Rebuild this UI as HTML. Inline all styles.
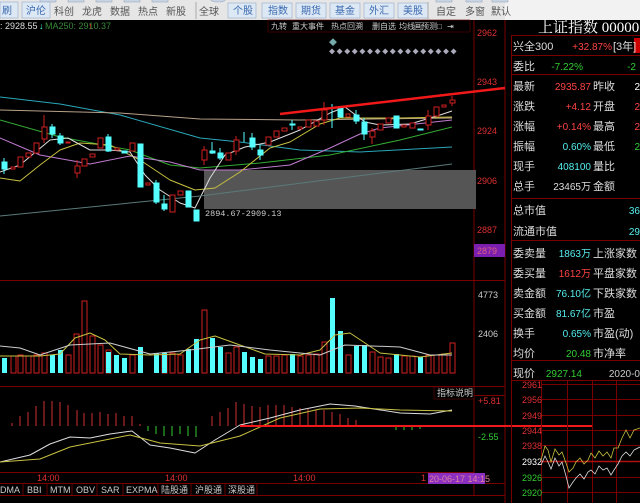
<!DOCTYPE html>
<html><head><meta charset="utf-8"><style>
body{margin:0;background:#000;width:640px;height:503px;overflow:hidden;font-family:"Liberation Sans","Noto Sans CJK SC",sans-serif}
svg{display:block}
</style></head><body>
<svg width="640" height="503" viewBox="0 0 640 503" xmlns="http://www.w3.org/2000/svg" font-family="Liberation Sans, Noto Sans CJK SC, sans-serif">
<rect width="640" height="503" fill="#000"/>
<!-- toolbar -->
<rect x="0" y="0" width="640" height="20" fill="#e6e6e6"/>
<rect x="505" y="0" width="135" height="20" fill="#f2f2f2"/>
<g fill="#c8d4e4" stroke="#9aa8bc" stroke-width="0.6">
<rect x="40" y="-6" width="16" height="8"/><rect x="68" y="-6" width="16" height="8"/><rect x="96" y="-6" width="16" height="8"/><rect x="124" y="-6" width="16" height="8"/><rect x="152" y="-6" width="16" height="8"/><rect x="210" y="-6" width="16" height="8" rx="6"/>
<rect x="436" y="-6" width="16" height="8"/><rect x="466" y="-6" width="16" height="8"/><rect x="492" y="-6" width="16" height="8"/>
</g>
<g fill="#dde8f5" stroke="#9fb3cc" stroke-width="0.7">
<rect x="0" y="2" width="18" height="16"/><rect x="22" y="2" width="28" height="16"/>
<rect x="228" y="3" width="28" height="15"/><rect x="262" y="3" width="30" height="15"/><rect x="296" y="3" width="30" height="15"/><rect x="330" y="3" width="30" height="15"/><rect x="364" y="3" width="30" height="15"/><rect x="398" y="3" width="30" height="15"/>
</g>
<line x1="196" y1="2" x2="196" y2="19" stroke="#aaa"/><line x1="428" y1="2" x2="428" y2="19" stroke="#aaa"/>
<g font-size="10" fill="#555">
<text x="2" y="14" fill="#3a6ab0">刷</text><text x="26" y="14" fill="#3a6ab0">沪伦</text>
<text x="54" y="15">科创</text><text x="82" y="15">龙虎</text><text x="110" y="15">数据</text><text x="138" y="15">热点</text><text x="166" y="15">新股</text>
<text x="199" y="15">全球</text>
<text x="233" y="14" fill="#3a6ab0">个股</text><text x="268" y="14" fill="#3a6ab0">指数</text><text x="301" y="14" fill="#3a6ab0">期货</text><text x="335" y="14" fill="#3a6ab0">基金</text><text x="369" y="14" fill="#3a6ab0">外汇</text><text x="403" y="14" fill="#3a6ab0">美股</text>
<text x="436" y="15">自定</text><text x="465" y="15">多窗</text><text x="491" y="15">默认</text>
</g>
<!-- info line -->
<g font-size="9">
<text x="0" y="29" fill="#ddd">: 2928.55</text><text x="39" y="29" fill="#4fd">↓</text>
<text x="45" y="29" fill="#3a8a3a">MA250: 2910.37</text><text x="88" y="29" fill="#f33">↑</text>
</g>
<g font-size="8" fill="#ccc">
<rect x="268" y="20" width="202" height="12" fill="#000" stroke="#600" stroke-width="0.6"/>
<text x="271" y="29">九转</text><text x="292" y="29">重大事件</text><text x="331" y="29">热点回溯</text><text x="372" y="29">删自选</text><text x="399" y="29">均线</text><text x="414" y="29">画</text><text x="421" y="29">预测</text><text x="437" y="29">□</text><text x="447" y="29">⇥</text>
</g>
<text x="329" y="45" font-size="8" fill="#7aa">◆</text>
<text x="329" y="54" font-size="6" fill="#aab" letter-spacing="1.6">◆◆◆◆◆◆◆◆◆◆◆◆◆◆◆◆◆</text>
<!-- grid / frames -->
<g stroke="#7a0000" stroke-width="1" fill="none">
<line x1="474" y1="20" x2="474" y2="495"/>
<line x1="505" y1="20" x2="505" y2="503"/>
<line x1="0" y1="280.5" x2="505" y2="280.5"/>
<line x1="0" y1="386.5" x2="505" y2="386.5"/>
<line x1="0" y1="472.5" x2="474" y2="472.5"/>
<line x1="0" y1="483.5" x2="505" y2="483.5"/>
<line x1="0" y1="495.5" x2="505" y2="495.5"/>
<line x1="474" y1="395.5" x2="505" y2="395.5"/>
</g>
<g font-size="9" fill="#e03030">
<text x="477" y="36">2962</text><text x="477" y="85">2943</text><text x="477" y="134">2924</text><text x="477" y="184">2906</text><text x="477" y="233">2887</text>
<text x="478" y="404">+5.81</text>
</g>
<rect x="474" y="244" width="31" height="13" fill="#7a1fb0"/>
<text x="477" y="254" font-size="9" fill="#e06080">2879</text>
<g font-size="9" fill="#ccc"><text x="478" y="298">4773</text><text x="478" y="337">2406</text></g>
<text x="478" y="440" font-size="9" fill="#3c3">-2.55</text>
<rect x="204" y="170" width="272" height="39" fill="#555"/>
<text x="205" y="216" font-size="8.5" fill="#ccc" font-family="Liberation Mono, monospace">2894.67-2909.13</text>
<!-- MAs -->
<g fill="none" stroke-width="1" stroke-linejoin="round">
<polyline points="0,97 60,104 120,115 200,138 240,142 300,150 360,152 452,147" stroke="#2aa7b8"/>
<polyline points="0,110 120,113 200,119 300,120 452,118" stroke="#b8a28a"/>
<polyline points="0,120 60,137 130,150 170,165 200,168 260,163 330,155 400,140 452,127" stroke="#3a3"/>
<polyline points="0,138 40,155 90,164 130,156 170,162 200,170 240,170 290,165 330,148 360,134 380,128 452,120" stroke="#c07ad0"/>
<polyline points="0,178 20,181 40,165 60,150 80,143 110,145 140,160 170,180 195,190 215,188 240,172 270,148 290,142 320,124 340,118 400,118 452,117" stroke="#c8c040"/>
<polyline points="0,172 20,165 50,140 68,138 90,150 110,150 130,152 145,175 160,190 180,203 195,208 210,178 225,155 245,147 270,142 300,130 330,113 345,107 365,122 380,125 410,124 440,115 452,111" stroke="#ddd"/>
<polyline points="0,216 200,196 452,164" stroke="#5a7a7a"/>
</g>
<!-- candles -->
<g stroke-width="1">
<g stroke="#d02020" fill="#000">
<rect x="11" y="167" width="4" height="2"/><rect x="18" y="157" width="5" height="10"/><rect x="26" y="153" width="5" height="4"/><rect x="34" y="143" width="5" height="10"/><line x1="44" y1="115" x2="44" y2="143"/><rect x="42" y="127" width="5" height="12"/>
<rect x="66" y="142" width="4" height="1"/><line x1="77" y1="160" x2="77" y2="178"/><rect x="75" y="166" width="5" height="7"/><rect x="82" y="159" width="5" height="7"/><rect x="90" y="154" width="5" height="3"/><rect x="98" y="138" width="5" height="10"/>
<rect x="115" y="148" width="4" height="2"/><rect x="130" y="143" width="5" height="8"/><rect x="146" y="183" width="4" height="2"/><rect x="170" y="195" width="5" height="17"/><rect x="178" y="191" width="5" height="4"/>
<line x1="204" y1="146" x2="204" y2="165"/><rect x="202" y="150" width="5" height="10"/><rect x="226" y="153" width="5" height="7"/><line x1="236" y1="136" x2="236" y2="155"/><rect x="234" y="140" width="5" height="11"/>
<rect x="266" y="137" width="5" height="8"/><rect x="274" y="131" width="5" height="6"/><rect x="282" y="128" width="5" height="3"/><rect x="298" y="127" width="4" height="2"/><rect x="306" y="120" width="5" height="7"/><rect x="314" y="121" width="5" height="5"/>
<line x1="324" y1="102" x2="324" y2="125"/><rect x="322" y="110" width="5" height="10"/><rect x="346" y="114" width="4" height="3"/><line x1="372" y1="128" x2="372" y2="144"/><rect x="370" y="131" width="5" height="6"/><rect x="378" y="124" width="5" height="6"/><rect x="386" y="118" width="5" height="5"/>
<rect x="402" y="125" width="4" height="2"/><rect x="410" y="123" width="5" height="5"/><line x1="428" y1="110" x2="428" y2="130"/><rect x="426" y="116" width="5" height="9"/><rect x="434" y="107" width="5" height="9"/><rect x="442" y="105" width="4" height="2"/><line x1="452" y1="96" x2="452" y2="106"/><rect x="450" y="100" width="5" height="3"/>
</g>
<g stroke="#5ff" fill="#5ff">
<line x1="4" y1="158" x2="4" y2="174"/><rect x="2" y="162" width="5" height="7"/><line x1="52" y1="124" x2="52" y2="138"/><rect x="50" y="127" width="5" height="7"/><line x1="60" y1="133" x2="60" y2="145"/><rect x="58" y="136" width="5" height="7"/>
<line x1="108" y1="134" x2="108" y2="152"/><rect x="106" y="137" width="5" height="14"/><rect x="122" y="151" width="5" height="2"/><rect x="138" y="144" width="5" height="43"/>
<line x1="156" y1="180" x2="156" y2="204"/><rect x="154" y="183" width="5" height="19"/><line x1="164" y1="195" x2="164" y2="211"/><rect x="162" y="204" width="5" height="5"/><rect x="186" y="191" width="5" height="16"/><rect x="194" y="210" width="5" height="11"/>
<line x1="212" y1="142" x2="212" y2="154"/><rect x="210" y="151" width="5" height="2"/><line x1="220" y1="148" x2="220" y2="160"/><rect x="218" y="153" width="5" height="5"/><line x1="244" y1="132" x2="244" y2="142"/>
<line x1="252" y1="133" x2="252" y2="150"/><rect x="250" y="138" width="5" height="9"/><line x1="260" y1="145" x2="260" y2="160"/><rect x="258" y="150" width="5" height="5"/><line x1="292" y1="120" x2="292" y2="130"/><rect x="290" y="124" width="5" height="1"/>
<line x1="332" y1="104" x2="332" y2="128"/><rect x="338" y="108" width="5" height="9"/><line x1="356" y1="110" x2="356" y2="124"/><rect x="354" y="115" width="5" height="6"/><line x1="364" y1="118" x2="364" y2="140"/><rect x="362" y="122" width="5" height="12"/>
<rect x="394" y="116" width="5" height="12"/><rect x="418" y="129" width="5" height="1"/>
</g>
</g>
<line x1="280" y1="114" x2="505" y2="88" stroke="#f01818" stroke-width="2.5"/>
<!-- volume -->
<g stroke="#d02020" fill="none">
<rect x="11" y="356" width="5" height="17"/><rect x="18" y="355" width="5" height="18"/><rect x="26" y="356" width="5" height="17"/><rect x="34" y="355" width="5" height="18"/><rect x="42" y="353" width="5" height="20"/>
<rect x="66" y="355" width="5" height="18"/><rect x="74" y="334" width="5" height="39"/><rect x="82" y="301" width="5" height="72"/><rect x="90" y="336" width="5" height="37"/><rect x="98" y="345" width="5" height="28"/><rect x="106" y="350" width="5" height="23"/>
<rect x="130" y="355" width="5" height="18"/><rect x="162" y="355" width="5" height="18"/><rect x="170" y="353" width="5" height="20"/><rect x="178" y="355" width="5" height="18"/><rect x="202" y="310" width="5" height="63"/>
<rect x="226" y="353" width="5" height="20"/><rect x="234" y="347" width="5" height="26"/><rect x="266" y="356" width="5" height="17"/><rect x="274" y="356" width="5" height="17"/><rect x="282" y="355" width="5" height="18"/>
<rect x="298" y="356" width="5" height="17"/><rect x="306" y="355" width="5" height="18"/><rect x="314" y="354" width="5" height="19"/><rect x="322" y="342" width="5" height="31"/><rect x="346" y="355" width="5" height="18"/><rect x="370" y="352" width="5" height="21"/><rect x="378" y="357" width="5" height="16"/><rect x="386" y="358" width="5" height="15"/>
<rect x="402" y="356" width="5" height="17"/><rect x="410" y="356" width="5" height="17"/><rect x="426" y="355" width="5" height="18"/><rect x="434" y="355" width="5" height="18"/><rect x="442" y="354" width="5" height="19"/><rect x="450" y="343" width="5" height="30"/>
</g>
<g fill="#5ff">
<rect x="2" y="358" width="5" height="15"/><rect x="50" y="355" width="5" height="18"/><rect x="58" y="350" width="5" height="23"/><rect x="106" y="352" width="5" height="21"/><rect x="114" y="355" width="5" height="18"/><rect x="122" y="358" width="5" height="15"/>
<rect x="138" y="347" width="5" height="26"/><rect x="154" y="353" width="5" height="20"/><rect x="162" y="353" width="5" height="20"/><rect x="186" y="349" width="5" height="24"/><rect x="194" y="339" width="5" height="34"/>
<rect x="210" y="338" width="5" height="35"/><rect x="218" y="347" width="5" height="26"/><rect x="242" y="352" width="5" height="21"/><rect x="250" y="357" width="5" height="16"/><rect x="258" y="359" width="5" height="14"/>
<rect x="290" y="354" width="5" height="19"/><rect x="330" y="298" width="5" height="75"/><rect x="338" y="331" width="5" height="42"/><rect x="354" y="346" width="5" height="27"/><rect x="362" y="345" width="5" height="28"/><rect x="394" y="354" width="5" height="19"/><rect x="418" y="357" width="5" height="16"/>
</g>
<g fill="none" stroke-width="1" stroke-linejoin="round">
<polyline points="0,356 40,356 60,354 75,338 90,333 105,340 120,354 150,355 180,354 200,340 215,336 240,345 265,354 300,355 320,350 335,335 350,333 365,343 380,353 420,357 452,353" stroke="#c8c040"/>
<polyline points="0,346 20,348 40,355 70,345 110,343 150,354 190,350 230,345 270,350 320,355 345,345 400,347 430,355 452,355" stroke="#ccc"/>
</g>
<!-- MACD -->
<g stroke="#d03030" stroke-width="1">
<line x1="12" y1="426" x2="12" y2="423"/><line x1="20" y1="426" x2="20" y2="416"/><line x1="28" y1="426" x2="28" y2="412"/><line x1="36" y1="426" x2="36" y2="406"/><line x1="44" y1="426" x2="44" y2="401"/><line x1="52" y1="426" x2="52" y2="401"/><line x1="60" y1="426" x2="60" y2="402"/><line x1="68" y1="426" x2="68" y2="405"/><line x1="77" y1="426" x2="77" y2="410"/><line x1="84" y1="426" x2="84" y2="413"/><line x1="92" y1="426" x2="92" y2="413"/><line x1="100" y1="426" x2="100" y2="412"/><line x1="108" y1="426" x2="108" y2="414"/><line x1="116" y1="426" x2="116" y2="413"/><line x1="124" y1="426" x2="124" y2="416"/><line x1="132" y1="426" x2="132" y2="416"/><line x1="140" y1="426" x2="140" y2="424"/>
<line x1="212" y1="426" x2="212" y2="416"/><line x1="220" y1="426" x2="220" y2="412"/><line x1="228" y1="426" x2="228" y2="408"/><line x1="236" y1="426" x2="236" y2="402"/><line x1="244" y1="426" x2="244" y2="404"/><line x1="252" y1="426" x2="252" y2="406"/><line x1="260" y1="426" x2="260" y2="407"/><line x1="268" y1="426" x2="268" y2="405"/><line x1="276" y1="426" x2="276" y2="405"/><line x1="284" y1="426" x2="284" y2="405"/><line x1="292" y1="426" x2="292" y2="407"/><line x1="300" y1="426" x2="300" y2="408"/><line x1="308" y1="426" x2="308" y2="409"/><line x1="316" y1="426" x2="316" y2="410"/><line x1="324" y1="426" x2="324" y2="410"/><line x1="332" y1="426" x2="332" y2="412"/><line x1="340" y1="426" x2="340" y2="414"/><line x1="348" y1="426" x2="348" y2="418"/><line x1="356" y1="426" x2="356" y2="420"/>
</g>
<g stroke="#3c3" stroke-width="1">
<line x1="148" y1="426" x2="148" y2="431"/><line x1="156" y1="426" x2="156" y2="434"/><line x1="164" y1="426" x2="164" y2="436"/><line x1="172" y1="426" x2="172" y2="436"/><line x1="180" y1="426" x2="180" y2="434"/><line x1="188" y1="426" x2="188" y2="436"/><line x1="196" y1="426" x2="196" y2="437"/><line x1="396" y1="426" x2="396" y2="430"/><line x1="404" y1="426" x2="404" y2="430"/><line x1="412" y1="426" x2="412" y2="430"/><line x1="420" y1="426" x2="420" y2="429"/>
</g>
<g fill="none" stroke-width="1" stroke-linejoin="round">
<polyline points="0,462 30,455 50,444 70,437 90,438 110,434 132,431 150,445 170,448 195,453 215,440 240,425 270,418 300,410 330,404 355,406 400,413 430,414 452,410" stroke="#ddd"/>
<polyline points="0,462 40,459 70,447 100,441 130,435 160,443 200,446 240,436 280,418 320,409 360,408 400,410 452,411" stroke="#c8c040"/>
</g>
<line x1="240" y1="426" x2="592" y2="426" stroke="#f01818" stroke-width="2"/>
<rect x="434" y="387" width="40" height="12" fill="#000" stroke="#600" stroke-width="0.6"/>
<text x="437" y="396" font-size="9" fill="#ccc">指标说明</text>
<g font-size="9" fill="#e03030"><text x="37" y="481">14:00</text><text x="165" y="481">14:00</text><text x="293" y="481">14:00</text><text x="421" y="481">1</text></g>
<rect x="428" y="473" width="57" height="11" fill="#8a2fc0"/>
<text x="429" y="482" font-size="9" fill="#e080a0">20-06-17 14:15</text>
<g font-size="9" fill="#ccc">
<text x="0" y="493">DMA</text><text x="27" y="493">BBI</text><text x="50" y="493">MTM</text><text x="76" y="493">OBV</text><text x="101" y="493">SAR</text><text x="126" y="493">EXPMA</text><text x="161" y="493">陆股通</text><text x="195" y="493">沪股通</text><text x="228" y="493">深股通</text>
</g>
<g stroke="#600"><line x1="23" y1="484" x2="23" y2="495"/><line x1="47" y1="484" x2="47" y2="495"/><line x1="72" y1="484" x2="72" y2="495"/><line x1="97" y1="484" x2="97" y2="495"/><line x1="123" y1="484" x2="123" y2="495"/><line x1="158" y1="484" x2="158" y2="495"/><line x1="191" y1="484" x2="191" y2="495"/><line x1="225" y1="484" x2="225" y2="495"/><line x1="257" y1="484" x2="257" y2="495"/></g>
<!-- right panel -->
<text x="538" y="32" font-size="15" fill="#fff" font-family="Liberation Serif, Noto Serif CJK SC, serif">上证指数 000001</text>
<g stroke="#7a0000" fill="none">
<line x1="511" y1="35.5" x2="640" y2="35.5"/><line x1="511" y1="55.5" x2="640" y2="55.5"/><line x1="511" y1="74.5" x2="640" y2="74.5"/><line x1="511" y1="198.5" x2="640" y2="198.5"/><line x1="511" y1="240.5" x2="640" y2="240.5"/><line x1="511" y1="360.5" x2="640" y2="360.5"/><line x1="511" y1="380.5" x2="640" y2="380.5"/><line x1="511.5" y1="35" x2="511.5" y2="503"/>
</g>
<rect x="634" y="38" width="6" height="15" fill="#c00"/>
<g font-size="11" fill="#ddd">
<text x="513" y="50">兴全300</text><text x="513" y="70">委比</text>
<text x="513" y="90">最新</text><text x="513" y="110">涨跌</text><text x="513" y="130">涨幅</text><text x="513" y="150">振幅</text><text x="513" y="170">现手</text><text x="513" y="190">总手</text>
<text x="513" y="214">总市值</text><text x="513" y="235">流通市值</text>
<text x="513" y="257">委卖量</text><text x="513" y="277">委买量</text><text x="513" y="297">卖金额</text><text x="513" y="317">买金额</text><text x="513" y="337">换手</text><text x="513" y="357">均价</text><text x="513" y="377">现价</text>
<text x="593" y="90">昨收</text><text x="593" y="110">开盘</text><text x="593" y="130">最高</text><text x="593" y="150">最低</text><text x="593" y="170">量比</text><text x="593" y="190">金额</text>
<text x="593" y="257">上涨家数</text><text x="593" y="277">平盘家数</text><text x="593" y="297">下跌家数</text><text x="593" y="317">市盈</text><text x="593" y="337">市盈(动)</text><text x="593" y="357">市净率</text>
<text x="613" y="50">[3年]</text>
</g>
<g font-size="10" text-anchor="end">
<text x="612" y="50" fill="#f44">+32.87%</text><text x="583" y="70" fill="#3c3">-7.22%</text><text x="636" y="70" fill="#3c3">-2</text>
<text x="591" y="90" fill="#f44">2935.87</text><text x="591" y="110" fill="#f44">+4.12</text><text x="591" y="130" fill="#f44">+0.14%</text><text x="591" y="150" fill="#5ee">0.60%</text><text x="591" y="170" fill="#5ee">408100</text><text x="591" y="190" fill="#ddd">23465万</text>
<text x="640" y="214" fill="#5ee">36</text><text x="640" y="235" fill="#5ee">29</text>
<text x="591" y="257" fill="#5ee">1863万</text><text x="591" y="277" fill="#f44">1612万</text><text x="591" y="297" fill="#5ee">76.10亿</text><text x="591" y="317" fill="#5ee">81.67亿</text><text x="591" y="337" fill="#5ee">0.65%</text><text x="591" y="357" fill="#3c3">20.48</text>
<text x="582" y="377" fill="#3c3">2927.14</text><text x="640" y="377" fill="#ccc">2020-0</text>
<text x="640" y="90" fill="#fff">2</text><text x="640" y="110" fill="#f44">2</text><text x="640" y="130" fill="#f44">2</text><text x="640" y="150" fill="#3c3">2</text>
</g>
<g stroke="#7a0000">
<line x1="541" y1="384.5" x2="640" y2="384.5"/><line x1="541" y1="399.5" x2="640" y2="399.5"/><line x1="541" y1="415.5" x2="640" y2="415.5"/><line x1="541" y1="430.5" x2="640" y2="430.5"/><line x1="541" y1="445.5" x2="640" y2="445.5"/><line x1="541" y1="477.5" x2="640" y2="477.5"/><line x1="541" y1="492.5" x2="640" y2="492.5"/>
<line x1="541.5" y1="381" x2="541.5" y2="503"/><line x1="567.5" y1="381" x2="567.5" y2="503"/><line x1="592.5" y1="381" x2="592.5" y2="503"/><line x1="616.5" y1="381" x2="616.5" y2="503"/>
</g>
<line x1="541" y1="461.5" x2="640" y2="461.5" stroke="#b01010" stroke-width="1.5"/>
<g font-size="9"><text x="522" y="388" fill="#e03030">2961</text><text x="522" y="403" fill="#e03030">2956</text><text x="522" y="419" fill="#e03030">2949</text><text x="522" y="434" fill="#e03030">2944</text><text x="522" y="449" fill="#e03030">2938</text><text x="522" y="465" fill="#fff">2932</text><text x="522" y="481" fill="#3c3">2926</text><text x="522" y="496" fill="#3c3">2920</text></g>
<path d="M541 460 L545 446 L548 450 L551 462 L555 449 L559 455 L562 452 L566 463 L569 472 L573 468 L576 462 L580 458 L584 464 L588 460 L591 453 L595 458 L599 451 L603 456 L607 452 L611 458 L614 448 L618 448 L622 438 L626 430 L630 438 L634 430 L640 428" fill="none" stroke="#c8c040" stroke-width="0.8"/>
<path d="M541 465 L545 456 L548 462 L551 469 L555 458 L559 466 L562 462 L566 476 L569 488 L573 482 L576 478 L580 474 L584 479 L588 472 L591 470 L595 474 L599 466 L603 470 L607 468 L611 475 L614 470 L618 464 L622 456 L626 452 L630 456 L634 450 L640 447" fill="none" stroke="#ddd" stroke-width="0.8"/>
</svg>
</body></html>
